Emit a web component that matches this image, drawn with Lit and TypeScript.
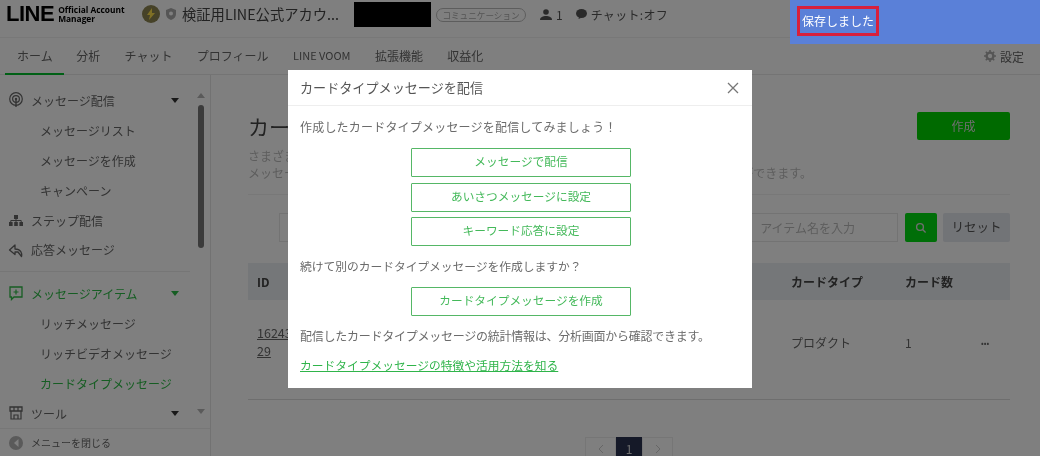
import { LitElement, html, css, svg } from "lit";
import { customElement } from "lit/decorators.js";

const caret = html`<svg class="caret" width="8" height="5" viewBox="0 0 8 5"><path d="M0 0h8L4 5z" fill="currentColor"/></svg>`;

const icons: Record<string, unknown> = {
  broadcast: svg`<circle cx="8" cy="7" r="6.3" fill="none" stroke="currentColor" stroke-width="1.2"/><circle cx="8" cy="7" r="3.4" fill="none" stroke="currentColor" stroke-width="1.2"/><circle cx="8" cy="7" r="1.2" fill="currentColor"/><path d="M8 8v7" stroke="currentColor" stroke-width="1.4"/>`,
  step: svg`<rect x="6" y="3" width="4" height="4" fill="currentColor"/><rect x="1" y="10" width="3.6" height="4" fill="currentColor"/><rect x="6.2" y="10" width="3.6" height="4" fill="currentColor"/><rect x="11.4" y="10" width="3.6" height="4" fill="currentColor"/><path d="M8 6v4M2.8 10V8.5h10.4V10" fill="none" stroke="currentColor"/>`,
  reply: svg`<path d="M7 3 1.5 8 7 12.5V10h3l3.5 4.5c.8-3-.5-7.5-6.5-7.5z" fill="none" stroke="currentColor" stroke-width="1.3" stroke-linejoin="round"/>`,
  item: svg`<path d="M2 2h12v10H6l-2.5 2.5V12H2z" fill="none" stroke="currentColor" stroke-width="1.3"/><path d="M8 4.5v5M5.5 7h5" stroke="currentColor" stroke-width="1.2"/>`,
  tool: svg`<path d="M2 2h12v4H2z" fill="none" stroke="currentColor" stroke-width="1.3"/><path d="M3 6v8h10V6M6 14v-4h4v4M6 2v4M10 2v4" fill="none" stroke="currentColor" stroke-width="1.2"/>`,
};

type Row = { t: string; k: "lead" | "sub"; icon?: string; on?: boolean; caret?: boolean; sep?: boolean };
const menu: Row[] = [
  { t: "メッセージ配信", k: "lead", icon: "broadcast", caret: true },
  { t: "メッセージリスト", k: "sub" },
  { t: "メッセージを作成", k: "sub" },
  { t: "キャンペーン", k: "sub" },
  { t: "ステップ配信", k: "lead", icon: "step" },
  { t: "応答メッセージ", k: "lead", icon: "reply", sep: true },
  { t: "メッセージアイテム", k: "lead", icon: "item", on: true, caret: true },
  { t: "リッチメッセージ", k: "sub" },
  { t: "リッチビデオメッセージ", k: "sub" },
  { t: "カードタイプメッセージ", k: "sub", on: true },
  { t: "ツール", k: "lead", icon: "tool", caret: true },
];
const tabs = ["ホーム", "分析", "チャット", "プロフィール", "LINE VOOM", "拡張機能", "収益化"];

@customElement("app-root")
export class AppRoot extends LitElement {
  static styles = css`
    :host { display: block; position: relative; width: 1040px; height: 456px; overflow: hidden; background: #fff; filter: blur(.4px);
      font-family: "Noto Sans CJK JP", "Noto Sans", sans-serif; font-size: 12px; color: #5c5c5c; }
    .top { height: 37px; display: flex; align-items: flex-start; padding: 0 0 0 6px; box-sizing: border-box; }
    .logo { display: flex; align-items: center; gap: 4px; height: 28px; width: 136px; color: #000; font-family: "Liberation Sans", sans-serif; }
    .logo b { font-size: 22px; font-weight: 700; letter-spacing: -.5px; }
    .logo span { font-size: 8.4px; line-height: 9px; font-weight: 700; font-family: "Open Sans", sans-serif; white-space: nowrap; }
    .avatar { width: 18px; height: 18px; border-radius: 50%; background: #8c8450; margin: 5px 0 0 0; display: flex; align-items: center; justify-content: center; }
    .shield { margin: 8px 5px 0 5px; color: #aaa; }
    .name { font-size: 14.3px; line-height: 28px; width: 172px; white-space: nowrap; color: #444; }
    .mask { width: 77px; height: 25px; margin: 2px 5px 0 0; background: #000; }
    .pill { width: 90px; height: 14px; margin-top: 8px; box-sizing: border-box; border: 1px solid #bbb; border-radius: 7px; font-size: 8.6px; line-height: 12px; text-align: center; color: #aaa; white-space: nowrap; }
    .meta { display: flex; align-items: center; height: 28px; margin-left: 14px; color: #555; gap: 4px; }
    .meta + .meta { margin-left: 13px; }
    .meta.chat { letter-spacing: .3px; }
    .tabs { height: 38px; box-sizing: border-box; border-top: 1px solid #f0f0f0; border-bottom: 1px solid #e8e8e8; display: flex; align-items: stretch; padding: 0 16px 0 5px; }
    .tab { padding: 0 12.2px; line-height: 35px; height: 37px; box-sizing: border-box; white-space: nowrap; color: #666; }
    .tab.first { border-bottom: 2px solid #00c02a; width: 59px; padding: 0 12px; }
    .tab.ln { font-size: 11px; }
    .set { margin-left: auto; line-height: 35px; display: flex; align-items: center; gap: 4px; color: #666; }
    .body { display: flex; height: 381px; }
    .side { width: 211px; flex: none; box-sizing: border-box; border-right: 1px solid #e4e4e4; display: flex; flex-direction: column; position: relative; }
    .menu { flex: 1; padding-top: 10px; min-height: 0; overflow: hidden; width: 190px; }
    .row { height: 30px; display: flex; align-items: center; color: #666; white-space: nowrap; position: relative; }
    .row.lead { padding-left: 8px; gap: 7px; }
    .row.sub { padding-left: 40px; }
    .row.on { color: #2dbb46; }
    .row.sep { margin-bottom: 14px; height: 29px; }
    .row.sep::after { content: ""; position: absolute; left: 0; right: 0; bottom: -8px; border-bottom: 1px solid #ececec; }
    .row svg.ic { flex: none; }
    .caret { position: absolute; left: 171px; top: 13px; color: #333; }
    .row.on .caret { color: #2dbb46; }
    .bar { position: absolute; left: 198px; top: 30px; width: 6px; height: 143px; border-radius: 3px; background: #777; }
    .arr { position: absolute; left: 197px; color: #b5b5b5; }
    .foot { height: 28px; box-sizing: border-box; border-top: 1px solid #eee; display: flex; align-items: center; padding-left: 9px; gap: 8px; font-size: 10px; color: #666; }
    .dot { width: 14px; height: 14px; border-radius: 50%; background: #b4b4b4; color: #fff; display: flex; align-items: center; justify-content: center; }
    .main { flex: 1; min-width: 0; padding: 37px 30px 0 37px; }
    .title { display: flex; align-items: center; justify-content: space-between; height: 28px; }
    .title h1 { margin: 0; font-size: 21px; font-weight: 400; color: #444; white-space: nowrap; }
    .create { width: 93px; height: 28px; border-radius: 2px; background: #00d400; color: #ddd; line-height: 27px; text-align: center; }
    .desc { margin-top: 7px; line-height: 17px; color: #bbb; white-space: nowrap; display: grid; grid-template-columns: 48px 1fr; }
    .desc em { font-style: normal; grid-row: 2; grid-column: 2; text-align: right; padding-right: 198px; }
    .hr { border-top: 1px solid #f0f0f0; margin-top: 13px; }
    .filter { display: flex; margin-top: 18px; height: 29px; padding-left: 31px; }
    .box { border: 1px solid #e6e6e6; box-sizing: border-box; flex: 1; margin-right: 10px; }
    .inp { border: 1px solid #e6e6e6; box-sizing: border-box; width: 158px; padding-right: 42px; text-align: right; line-height: 27px; color: #bbb; white-space: nowrap; }
    .srch { width: 32px; margin-left: 7px; border-radius: 2px; background: #00dc10; display: flex; align-items: center; justify-content: center; }
    .reset { width: 67px; margin-left: 6px; border-radius: 2px; background: #e4e8ee; color: #555; text-align: center; line-height: 27px; font-size: 12.5px; }
    .grid { display: grid; grid-template-columns: 534px 114px 1fr 36px; padding-left: 9px; }
    .th { margin-top: 21px; height: 37px; background: #eaeef2; align-items: center; font-weight: 700; color: #444; }
    .tr { height: 100px; box-sizing: border-box; padding-bottom: 15px; align-items: center; border-bottom: 1px solid #ddd; color: #666; }
    .id { line-height: 18px; text-decoration: underline; font-size: 12.5px; }
    .more { font-size: 8px; padding-left: 7px; }
    .pager { display: flex; justify-content: center; margin-top: 37px; height: 20px; }
    .pg { width: 31px; height: 30px; box-sizing: border-box; border: 1px solid #ececec; display: flex; align-items: center; justify-content: center; color: #ccc; padding-bottom: 7px; }
    .pg.cur { width: 26px; background: #2a3350; border-color: #2a3350; color: #ddd; }
    .scrim { position: absolute; inset: 0; background: rgba(0, 0, 0, .5); display: flex; justify-content: center; align-items: flex-start; }
    .modal { width: 464px; height: 318px; margin-top: 70px; background: #fff; box-sizing: border-box; color: #6b6b6b; }
    .mh { height: 36px; box-sizing: border-box; border-bottom: 1px solid #eee; display: flex; align-items: center; justify-content: space-between; padding: 0 13px 0 12px; font-size: 13.1px; color: #555; }
    .mb { padding: 0 12px; display: flex; flex-direction: column; }
    .mb p { margin: 0; line-height: 18px; white-space: nowrap; }
    .btn { width: 220px; height: 29px; box-sizing: border-box; align-self: center; margin-left: 2px; border: 1px solid #55b766; border-radius: 1px; color: #44b95a; text-align: center; line-height: 24px; margin-bottom: 6px; font-size: 11.7px; }
    .btn.mid { margin-bottom: 5px; }
    .btn.last { margin-bottom: 0; }
    .mb .l1 { margin-top: 12px; margin-bottom: 12px; letter-spacing: .2px; }
    .mb .l2 { margin-top: 11px; margin-bottom: 12px; font-size: 11.8px; letter-spacing: -.06px; }
    .mb .l3 { margin-top: 11px; letter-spacing: -.25px; }
    .mb .link { margin-top: 11px; color: #2fb44a; text-decoration: underline; font-size: 11.75px; }
    .toast { position: absolute; top: 0; right: 0; width: 250px; height: 44px; background: #5a80d8; padding: 6px 0 0 7px; box-sizing: border-box; }
    .toast span { display: block; width: 82px; height: 30px; box-sizing: border-box; border: 3px solid #d8203c; color: #fff; text-align: center; line-height: 23px; font-size: 12px; white-space: nowrap; }
  `;

  render() {
    return html`
      <div class="top">
        <div class="logo"><b>LINE</b><span>Official Account<br />Manager</span></div>
        <div class="avatar"><svg width="10" height="12" viewBox="0 0 10 12"><path d="M6 0 1 7h3L3 12l6-7H6z" fill="#ffe14a"/></svg></div>
        <svg class="shield" width="12" height="12" viewBox="0 0 12 12"><path d="M6 0 11 2v4c0 3-2 5-5 6-3-1-5-3-5-6V2z" fill="currentColor"/><circle cx="6" cy="5.5" r="2" fill="#fff"/></svg>
        <div class="name">検証用LINE公式アカウ...</div>
        <div class="mask"></div>
        <div class="pill">コミュニケーション</div>
        <div class="meta"><svg width="12" height="11" viewBox="0 0 12 11"><circle cx="6" cy="3" r="2.8" fill="currentColor"/><path d="M0 11c0-3 3-4 6-4s6 1 6 4z" fill="currentColor"/></svg>1</div>
        <div class="meta chat"><svg width="11" height="10" viewBox="0 0 11 10"><ellipse cx="5.5" cy="4.5" rx="5.5" ry="4.5" fill="currentColor"/><path d="M3 8l-.5 2L6 8.5z" fill="currentColor"/></svg>チャット:オフ</div>
      </div>
      <div class="tabs">
        ${tabs.map((t, i) => html`<div class="tab ${i === 0 ? "first" : ""} ${t.startsWith("LINE") ? "ln" : ""}">${t}</div>`)}
        <div class="set"><svg width="12" height="12" viewBox="0 0 12 12"><circle cx="6" cy="6" r="3.4" fill="none" stroke="#aaa" stroke-width="2.4"/><path d="M6 0v2M6 10v2M0 6h2M10 6h2M1.8 1.8l1.4 1.4M8.8 8.8l1.4 1.4M1.8 10.2l1.4-1.4M8.8 3.2l1.4-1.4" stroke="#aaa" stroke-width="1.6"/></svg>設定</div>
      </div>
      <div class="body">
        <aside class="side">
          <div class="menu">
            ${menu.map((r) => html`<div class="row ${r.k} ${r.on ? "on" : ""} ${r.sep ? "sep" : ""}">
              ${r.icon ? html`<svg class="ic" width="16" height="16" viewBox="0 0 16 16">${icons[r.icon]}</svg>` : ""}
              ${r.t}${r.caret ? caret : ""}
            </div>`)}
          </div>
          <svg class="arr" style="top:18px" width="8" height="5" viewBox="0 0 8 5"><path d="M0 5h8L4 0z" fill="currentColor"/></svg>
          <div class="bar"></div>
          <svg class="arr" style="top:334px" width="8" height="5" viewBox="0 0 8 5"><path d="M0 0h8L4 5z" fill="currentColor"/></svg>
          <div class="foot"><span class="dot"><svg width="5" height="8" viewBox="0 0 5 8"><path d="M4.5 0v8L0 4z" fill="currentColor"/></svg></span>メニューを閉じる</div>
        </aside>
        <main class="main">
          <div class="title"><h1>カー</h1><div class="create">作成</div></div>
          <div class="desc"><span>さまざま</span><i></i><span>メッセー</span><em>ができます。</em></div>
          <div class="hr"></div>
          <div class="filter">
            <div class="box"></div>
            <div class="inp">アイテム名を入力</div>
            <div class="srch"><svg width="12" height="12" viewBox="0 0 12 12"><circle cx="5" cy="5" r="3.4" fill="none" stroke="#ddd" stroke-width="1.4"/><path d="M7.6 7.6l3 3" stroke="#ddd" stroke-width="1.4"/></svg></div>
            <div class="reset">リセット</div>
          </div>
          <div class="grid th"><div>ID</div><div>カードタイプ</div><div>カード数</div><div></div></div>
          <div class="grid tr"><div class="id">16243<br />29</div><div>プロダクト</div><div>1</div><div class="more">•••</div></div>
          <div class="pager">
            <div class="pg"><svg width="6" height="10" viewBox="0 0 6 10"><path d="M5 1 1 5l4 4" fill="none" stroke="currentColor"/></svg></div>
            <div class="pg cur">1</div>
            <div class="pg"><svg width="6" height="10" viewBox="0 0 6 10"><path d="m1 1 4 4-4 4" fill="none" stroke="currentColor"/></svg></div>
          </div>
        </main>
      </div>
      <div class="scrim">
        <section class="modal">
          <div class="mh"><span>カードタイプメッセージを配信</span>
            <svg width="12" height="12" viewBox="0 0 12 12"><path d="M1 1l10 10M11 1 1 11" stroke="#777" stroke-width="1.3"/></svg></div>
          <div class="mb">
            <p class="l1">作成したカードタイプメッセージを配信してみましょう！</p>
            <div class="btn">メッセージで配信</div>
            <div class="btn mid">あいさつメッセージに設定</div>
            <div class="btn last">キーワード応答に設定</div>
            <p class="l2">続けて別のカードタイプメッセージを作成しますか？</p>
            <div class="btn last">カードタイプメッセージを作成</div>
            <p class="l3">配信したカードタイプメッセージの統計情報は、分析画面から確認できます。</p>
            <p class="link">カードタイプメッセージの特徴や活用方法を知る</p>
          </div>
        </section>
      </div>
      <div class="toast"><span>保存しました</span></div>
    `;
  }
}
